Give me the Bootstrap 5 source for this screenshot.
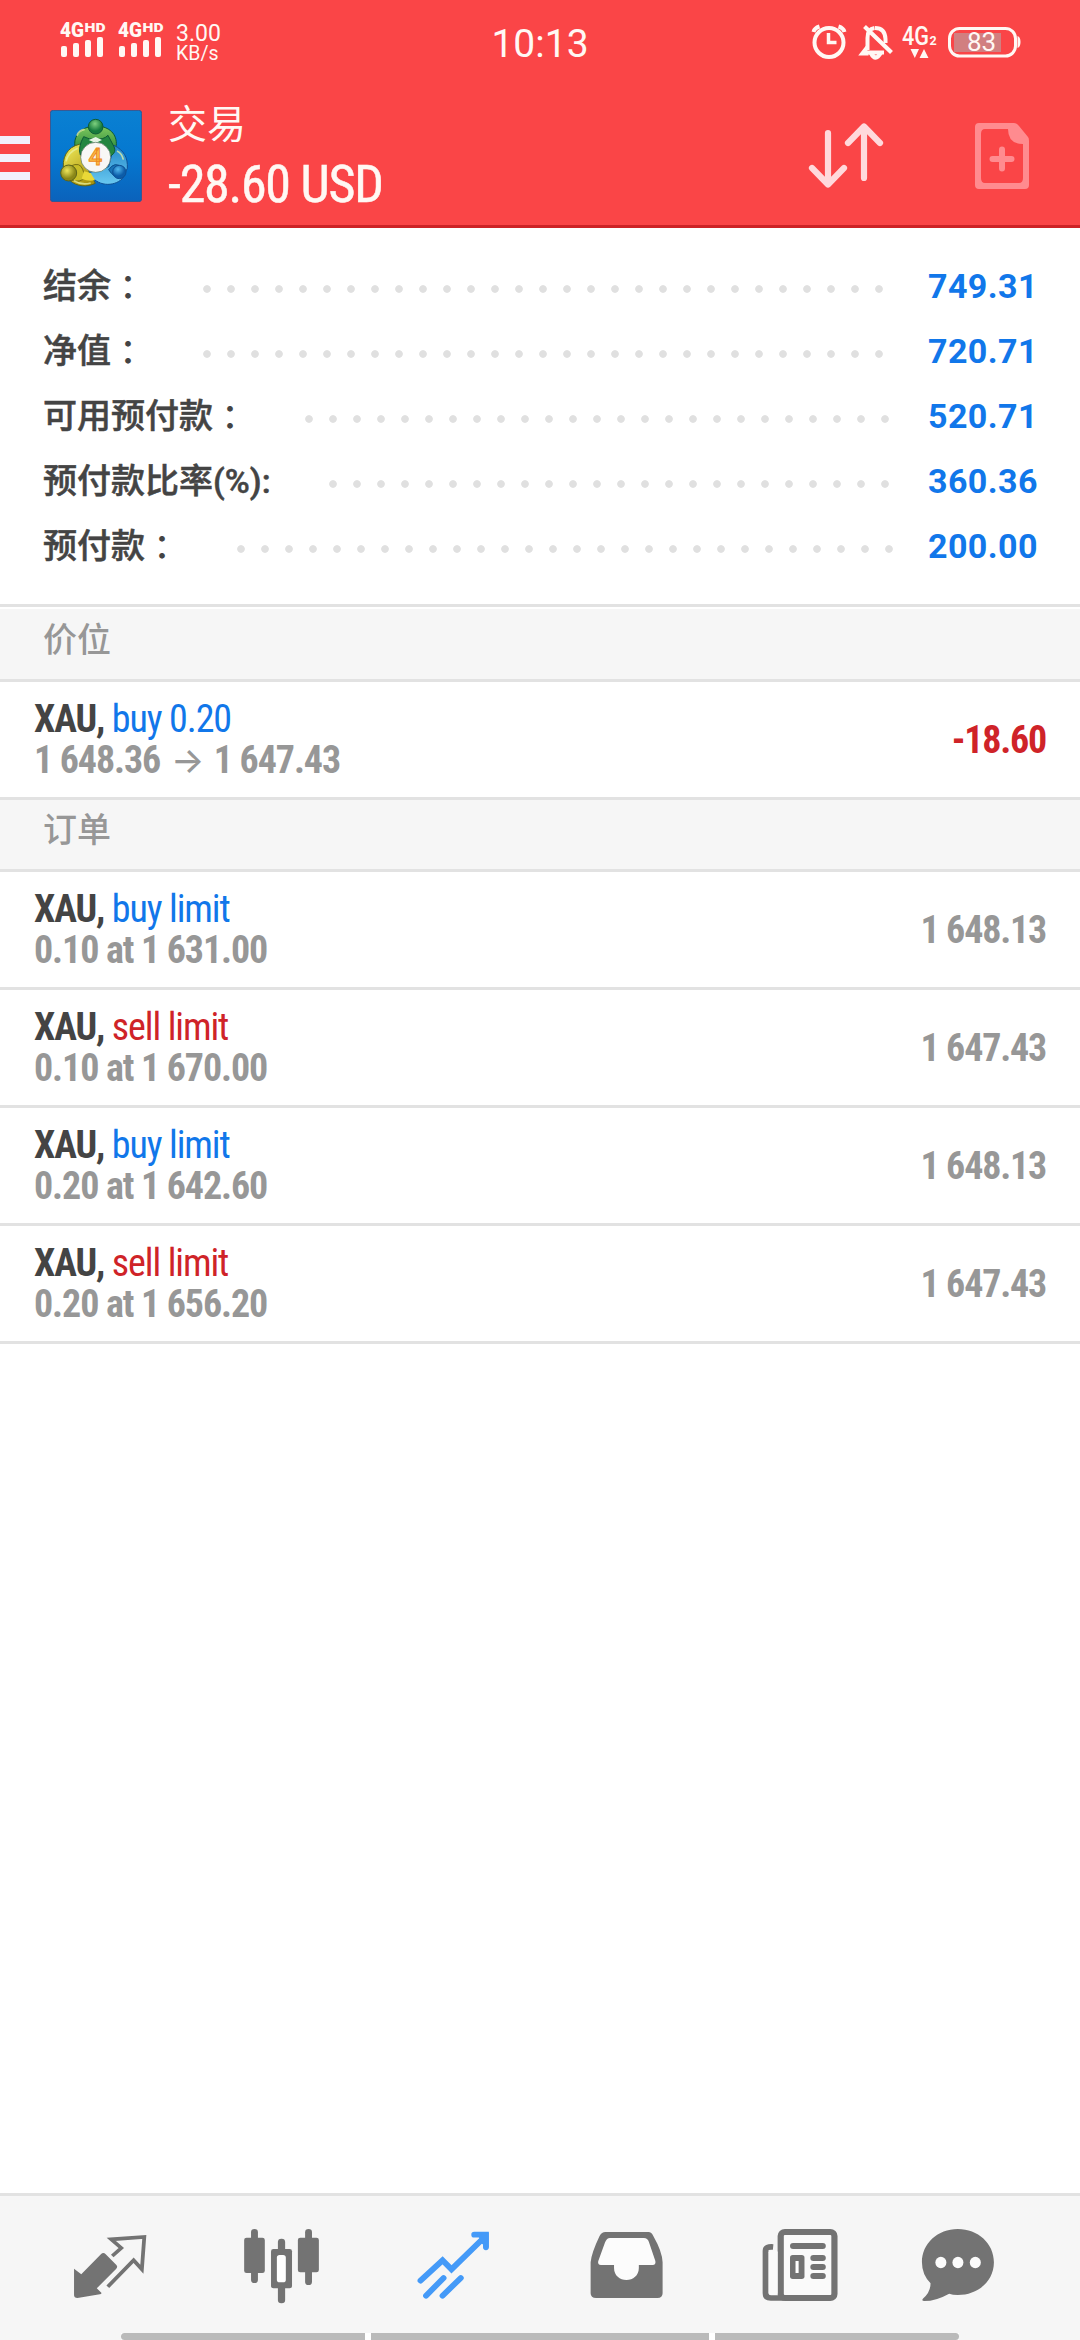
<!DOCTYPE html>
<html lang="zh-CN">
<head>
<meta charset="utf-8">
<meta name="viewport" content="width=device-width, initial-scale=1">
<title>交易</title>
<link rel="stylesheet" href="https://cdn.jsdelivr.net/npm/bootstrap@5.3.0/dist/css/bootstrap.min.css">
<style>
body{font-family:Roboto,"Noto Sans CJK SC",sans-serif;background:#fff;color:#444;width:1080px;height:2340px;overflow:hidden}
svg{display:block;flex:none}
.cond{font-family:"Roboto Condensed",Roboto,"Noto Sans CJK SC",sans-serif;font-stretch:75%}
.topbar{height:228px;background:#fa4547;border-bottom:3px solid #cc2226;color:#fff8f4}
.statusbar{height:84px}
.net-speed{font-size:23px;line-height:19px;margin-left:12px;margin-top:24px;width:61px}
.net-unit{font-size:19.5px}
.clock{font-size:39px;line-height:46px;margin-top:21px;padding-left:43px}
.actionbar{height:141px}
.screen-title{font-size:39px;line-height:42px;margin-top:16px;font-family:"Noto Sans CJK SC",sans-serif}
.screen-total{font-size:52px;line-height:60px;margin-top:13px;white-space:nowrap;letter-spacing:-1.25px;-webkit-text-stroke:.5px}
.summary{height:376px;padding:29px 0 0 43px}
.sum-row{height:65px}
.sum-label{font-size:34px;font-weight:500;line-height:58px;height:65px;white-space:nowrap;-webkit-text-stroke:.5px}
.colon{font-family:"Noto Sans CJK TC",sans-serif;line-height:0;vertical-align:-2px;-webkit-text-stroke:0}
.sum-value{font-size:34px;font-weight:700;color:#1177ea;width:152px;padding-bottom:6px;letter-spacing:.4px}
.dots{height:8px;margin-bottom:2px;background:radial-gradient(circle at 4px 4px,#e0e0e0 3.4px,transparent 4.2px) 0 0/24px 8px repeat-x}
.rule3{border-bottom:3px solid #e2e2e2}
.sect{height:72px;background:#f6f6f6;color:#979797;font-size:34px;font-weight:500;line-height:50px;padding:5px 0 0 43px}
.sect.top-gap{height:75px;border-top:2px solid #fff;padding-top:6px}
.deal{height:118px;padding:0 34px 0 34px;font-size:38px;line-height:41px;white-space:nowrap;letter-spacing:-1.1px}
.deal>b{padding-top:2px;letter-spacing:-1.2px}
.deal-lines{margin-top:17px}
.blue{color:#1177ea}.red{color:#cf2328}.gray{color:#979797}
.arr{font-family:Inter,sans-serif;font-size:35px;font-weight:500;font-stretch:100%;margin:0 3px;line-height:1}
.tabs{height:147px;background:#f6f6f6;border-top:3px solid #e2e2e2}
.tabs svg{color:#737373}
.handles{height:7px;margin:0 121px;gap:6px;background:#fff}
.handles span{height:7px;background:#bababa;flex:338 0 0}
.handles span:first-child{flex:244 0 0;border-radius:4px 0 0 4px}
.handles span:last-child{flex:244 0 0;border-radius:0 4px 4px 0}
</style>
</head>
<body class="d-flex flex-column">
<header class="topbar flex-shrink-0">
  <div class="statusbar d-flex">
    <svg width="164" height="84" viewBox="0 0 164 84" fill="#fff8f4" font-family="Roboto" font-weight="900">
      <g id="sim"><text x="60" y="37" font-size="20" textLength="24" lengthAdjust="spacingAndGlyphs">4G</text><text x="84.5" y="32" font-size="13.5" textLength="21" lengthAdjust="spacingAndGlyphs">HD</text>
      <rect x="61" y="46" width="6" height="11" rx="2"/><rect x="73" y="43" width="6" height="14" rx="2"/><rect x="85" y="40" width="6" height="17" rx="2"/><rect x="97" y="37" width="6" height="20" rx="2"/></g>
      <use href="#sim" x="58"/>
    </svg>
    <div class="net-speed">3.00<br><span class="net-unit">KB/s</span></div>
    <div class="clock flex-grow-1 text-center">10:13</div>
    <svg width="280" height="84" viewBox="800 0 280 84" fill="none" stroke="#fff8f4" font-family="Roboto">
      <circle cx="829" cy="42.500" r="14.500" stroke-width="4"/><path d="M828.500 33v9.500h8" stroke-width="3.500"/><path d="M813.500 32q1-4 6-5.500M844.500 32q-1-4-6-5.500" stroke-width="4"/>
      <path d="M867.500 50v-12q0-9 7-10M875 28q10 0 10.500 11v4M863 52.500H884" stroke-width="4"/><path d="M867.500 47l-5 6.500h6M864.500 26.500l27 26" stroke-width="4.200"/><path d="M871 53q4.500 9 9.500 0" stroke-width="4.500"/>
      <g fill="#fff8f4" stroke="none"><text x="902" y="44.500" font-size="25.500" font-weight="500" textLength="27" lengthAdjust="spacingAndGlyphs">4G</text><text x="929.500" y="44.500" font-size="12.500" font-weight="700">2</text>
      <path d="M910.500 49h8.500l-4.200 9zM919.500 58h9l-4.500-9z"/></g>
      <rect x="954" y="33" width="47" height="19" fill="#d17f80" stroke="none"/>
      <rect x="949.500" y="28.500" width="66" height="27.500" rx="10" stroke-width="3"/><path d="M1017.500 36q3 1 3 6t-3 6z" fill="#fff8f4" stroke="none"/>
      <text x="967" y="51" font-size="26" fill="#fff8f4" stroke="none">83</text>
    </svg>
  </div>
  <div class="actionbar d-flex">
    <svg width="50" height="141" viewBox="0 84 50 141" fill="#f2f0fb"><path d="M0 136h30v8H0zM0 154h30v8H0zM0 172h30v8H0z"/></svg>
    <svg class="logo" style="margin-top:26px" width="92" height="92" viewBox="150 330 276 276">
      <defs><linearGradient id="lb" x2="0" y2="1"><stop stop-color="#0a80d2"/><stop offset=".5" stop-color="#0578d0"/><stop offset="1" stop-color="#0b62bb"/></linearGradient>
      <linearGradient id="lg" x2="0" y2="1"><stop stop-color="#7cc65c"/><stop offset="1" stop-color="#157a32"/></linearGradient>
      <linearGradient id="ly" x2=".7" y2="1"><stop stop-color="#f4f060"/><stop offset="1" stop-color="#a9920c"/></linearGradient>
      <linearGradient id="lc" x2="0" y2="1"><stop stop-color="#2287c9"/><stop offset="1" stop-color="#69c8f0"/></linearGradient>
      <radialGradient id="hg" cx=".45" cy=".3"><stop stop-color="#7ed07e"/><stop offset="1" stop-color="#167a3c"/></radialGradient>
      <radialGradient id="hy" cx=".4" cy=".35"><stop stop-color="#eee65a"/><stop offset="1" stop-color="#8a8718"/></radialGradient>
      <radialGradient id="hb" cx=".4" cy=".3"><stop stop-color="#52b8ee"/><stop offset="1" stop-color="#0c5ca8"/></radialGradient></defs>
      <rect x="151" y="331" width="274" height="274" rx="9" fill="url(#lb)" stroke="#35568f" stroke-width="3"/>
      <g stroke-width="3">
      <path d="M266 381C236 388 220 414 225 440L252 440L256 470H318L344 456C358 420 342 390 310 381Z" fill="url(#lg)" stroke="#0d5a35"/>
      <path d="M252 431C213 433 187 460 190 502L208 540C230 561 262 562 286 550L262 505Z" fill="url(#ly)" stroke="#5c6419"/>
      <path d="M342 436C372 451 384 473 382 505L366 537C342 560 290 562 267 518L326 500Z" fill="url(#lc)" stroke="#0e4f94"/>
      <path d="M251 410Q268 420 287 417Q310 420 324 406L342 440Q350 455 334 467L241 465Q233 442 251 410Z" fill="#238640" stroke="#0d5a35"/>
      <path d="M212 498Q240 485 248 508L256 532Q240 550 214 540Z" fill="#c8bd27" stroke="#777012"/>
      <path d="M252 514L272 519L285 540Q267 546 245 536Z" fill="#e9d837" stroke="none"/>
      <path d="M266 420L287 411L306 420L287 429Z" fill="#e4f4e4" stroke="none"/>
      <path d="M326 509Q345 482 366 503L362 530Q342 535 326 509Z" fill="#1873b8" stroke="#0b508e"/>
      <path d="M231 407Q236 391 254 388M198 484Q204 457 233 445M370 479Q366 460 351 453M221 542Q245 557 272 549" fill="none" stroke="#e8f2a0" stroke-opacity=".75" stroke-width="5"/>
      <circle cx="287" cy="380" r="22" fill="url(#hg)" stroke="#0d5a35"/>
      <circle cx="206" cy="519" r="24" fill="url(#hy)" stroke="#5c6419"/>
      <circle cx="358" cy="516" r="20" fill="url(#hb)" stroke="#0e4f94"/></g>
      <circle cx="287" cy="472" r="45" fill="#f8f7f5" stroke="#53705c" stroke-width="2"/>
      <text x="286" y="496" font-family="Roboto" font-weight="500" font-size="72" text-anchor="middle" fill="#fbc14a" stroke="#ef8a20" stroke-width="3">4</text>
    </svg>
    <div class="flex-grow-1" style="margin-left:26px">
      <div class="screen-title">交易</div>
      <div class="screen-total cond">-28.60 USD</div>
    </div>
    <svg width="280" height="141" viewBox="800 84 280 141" fill="none" stroke-linecap="round" stroke-linejoin="round">
      <path d="M828 133v51M812 168l16 16.500L844 168M864 178V127M848 143l16-16.500L880 143" stroke="#ffd9dc" stroke-width="6.200"/>
      <path fill="#ff8b8f" fill-rule="evenodd" d="M979 123H1014Q1017 123 1019 126L1028 137Q1029 138 1029 141V185Q1029 189 1025 189H979Q975 189 975 185V127Q975 123 979 123ZM985 129Q981 129 981 134V178Q981 183 985 183H1019Q1023 183 1023 178V144Q1008 144 1008 129Z"/>
      <path d="M1002 149.500v19M992.500 159h19" stroke="#ff8b8f" stroke-width="6"/>
    </svg>
  </div>
</header>
<section class="summary flex-shrink-0">
  <div class="sum-row d-flex align-items-center"><span class="sum-label">结余<span class="colon" lang="zh-TW">：</span></span><span class="dots" style="margin-left:58px;width:680px"></span><span class="sum-value ms-auto">749.31</span></div>
  <div class="sum-row d-flex align-items-center"><span class="sum-label">净值<span class="colon" lang="zh-TW">：</span></span><span class="dots" style="margin-left:58px;width:680px"></span><span class="sum-value ms-auto">720.71</span></div>
  <div class="sum-row d-flex align-items-center"><span class="sum-label">可用预付款<span class="colon" lang="zh-TW">：</span></span><span class="dots" style="margin-left:58px;width:584px"></span><span class="sum-value ms-auto">520.71</span></div>
  <div class="sum-row d-flex align-items-center"><span class="sum-label">预付款比率(%):</span><span class="dots" style="margin-left:58px;width:560px"></span><span class="sum-value ms-auto">360.36</span></div>
  <div class="sum-row d-flex align-items-center"><span class="sum-label">预付款<span class="colon" lang="zh-TW">：</span></span><span class="dots" style="margin-left:58px;width:656px"></span><span class="sum-value ms-auto">200.00</span></div>
</section>
<div class="rule3"></div>
<main class="flex-grow-1">
  <div class="sect top-gap rule3">价位</div>
  <div class="deal rule3 d-flex justify-content-between cond">
    <div class="deal-lines"><div><b>XAU,</b> <span class="blue">buy 0.20</span></div><div class="gray fw-bold">1 648.36 <span class="arr">→</span> 1 647.43</div></div>
    <b class="red align-self-center">-18.60</b>
  </div>
  <div class="sect rule3">订单</div>
  <div class="deal rule3 d-flex justify-content-between cond">
    <div class="deal-lines"><div><b>XAU,</b> <span class="blue">buy limit</span></div><div class="gray fw-bold">0.10 at 1 631.00</div></div>
    <b class="gray align-self-center">1 648.13</b>
  </div>
  <div class="deal rule3 d-flex justify-content-between cond">
    <div class="deal-lines"><div><b>XAU,</b> <span class="red">sell limit</span></div><div class="gray fw-bold">0.10 at 1 670.00</div></div>
    <b class="gray align-self-center">1 647.43</b>
  </div>
  <div class="deal rule3 d-flex justify-content-between cond">
    <div class="deal-lines"><div><b>XAU,</b> <span class="blue">buy limit</span></div><div class="gray fw-bold">0.20 at 1 642.60</div></div>
    <b class="gray align-self-center">1 648.13</b>
  </div>
  <div class="deal rule3 d-flex justify-content-between cond">
    <div class="deal-lines"><div><b>XAU,</b> <span class="red">sell limit</span></div><div class="gray fw-bold">0.20 at 1 656.20</div></div>
    <b class="gray align-self-center">1 647.43</b>
  </div>
</main>
<nav class="tabs flex-shrink-0">
  <div class="d-flex">
    <svg width="180" height="137" viewBox="0 48 522.7 411" preserveAspectRatio="none"><path fill="currentColor" d="M215 266L236 283L293 223Q300 215 307 223L338 255Q343 261 337 267L281 325L295 339Q294 343 290 343L225 354Q215 354 215 345Z"/><path d="M326 228L352 204L323 178L419 171L412 268L388 241L313 320" fill="none" stroke="currentColor" stroke-width="11"/></svg>
    <svg width="180" height="137" viewBox="522.700 48 522.700 411" preserveAspectRatio="none" fill="currentColor"><rect x="729" y="147" width="20" height="162" rx="10"/><rect x="709" y="173" width="60" height="106" rx="7"/><rect x="886" y="147" width="20" height="168" rx="10"/><rect x="865" y="173" width="61" height="104" rx="7"/><rect x="807" y="176" width="21" height="194" rx="10"/><rect x="787" y="207" width="61" height="118" rx="7"/><rect x="804" y="225" width="26" height="82" rx="8" fill="#fff"/></svg>
    <svg width="180" height="137" viewBox="1045.300 48 522.700 411" preserveAspectRatio="none" fill="none" stroke="#449af8" stroke-width="17"><path d="M1221 302L1285 241L1311 268L1408 170M1237 347L1288 294M1285 347L1338 294" stroke-linecap="round"/><path d="M1377 164H1411V202" stroke-linecap="round"/><path d="M1385 158h34v45l-20-12z" fill="#449af8" stroke="none"/></svg>
    <svg width="180" height="137" viewBox="0 48 522.700 411" preserveAspectRatio="none"><path fill="currentColor" d="M190 156H315Q324 156 329 168Q355 215 356 247V340Q356 354 341 354H163Q147 354 147 340V247Q149 220 173 168Q179 156 190 156Z"/><path fill="#fcfcfc" d="M203 174H302Q312 174 316 185L335 243Q337 255 327 255H287V264C287 287 270 300 251 300S215 287 215 264V255H177Q167 255 169 244L189 187Q194 174 203 174Z"/></svg>
    <svg width="180" height="137" viewBox="522.700 48 522.700 411" preserveAspectRatio="none"><rect x="699" y="156" width="156" height="198" rx="12" fill="#fafafa" stroke="currentColor" stroke-width="18"/><path d="M677 201Q655 199 655 212V340Q655 354 670 354H710" fill="none" stroke="currentColor" stroke-width="17"/><rect x="664" y="211" width="26" height="134" rx="6" fill="#fafafa"/><path d="M735 198H821M794 234H821M794 261H821M794 288H821" stroke="currentColor" stroke-width="18" stroke-linecap="round"/><rect x="726" y="225" width="42" height="72" rx="8" fill="currentColor"/><rect x="742" y="243" width="9" height="36" fill="#fff"/></svg>
    <svg width="180" height="137" viewBox="1045.300 48 522.700 411" preserveAspectRatio="none"><path fill="currentColor" d="M1213 147C1272 147 1318 190 1318 247S1272 345 1213 345Q1198 345 1188 341Q1150 363 1116 363Q1106 363 1113 355Q1134 336 1134 310Q1109 284 1109 247C1109 190 1155 147 1213 147Z"/><g fill="#fcfcfc"><ellipse cx="1164" cy="247.500" rx="16" ry="17"/><ellipse cx="1213.500" cy="247.500" rx="16" ry="17"/><ellipse cx="1264" cy="247.500" rx="16" ry="17"/></g></svg>
  </div>
  <div class="handles d-flex"><span></span><span></span><span></span></div>
</nav>
<script src="https://cdn.jsdelivr.net/npm/bootstrap@5.3.0/dist/js/bootstrap.bundle.min.js"></script>
</body>
</html>
